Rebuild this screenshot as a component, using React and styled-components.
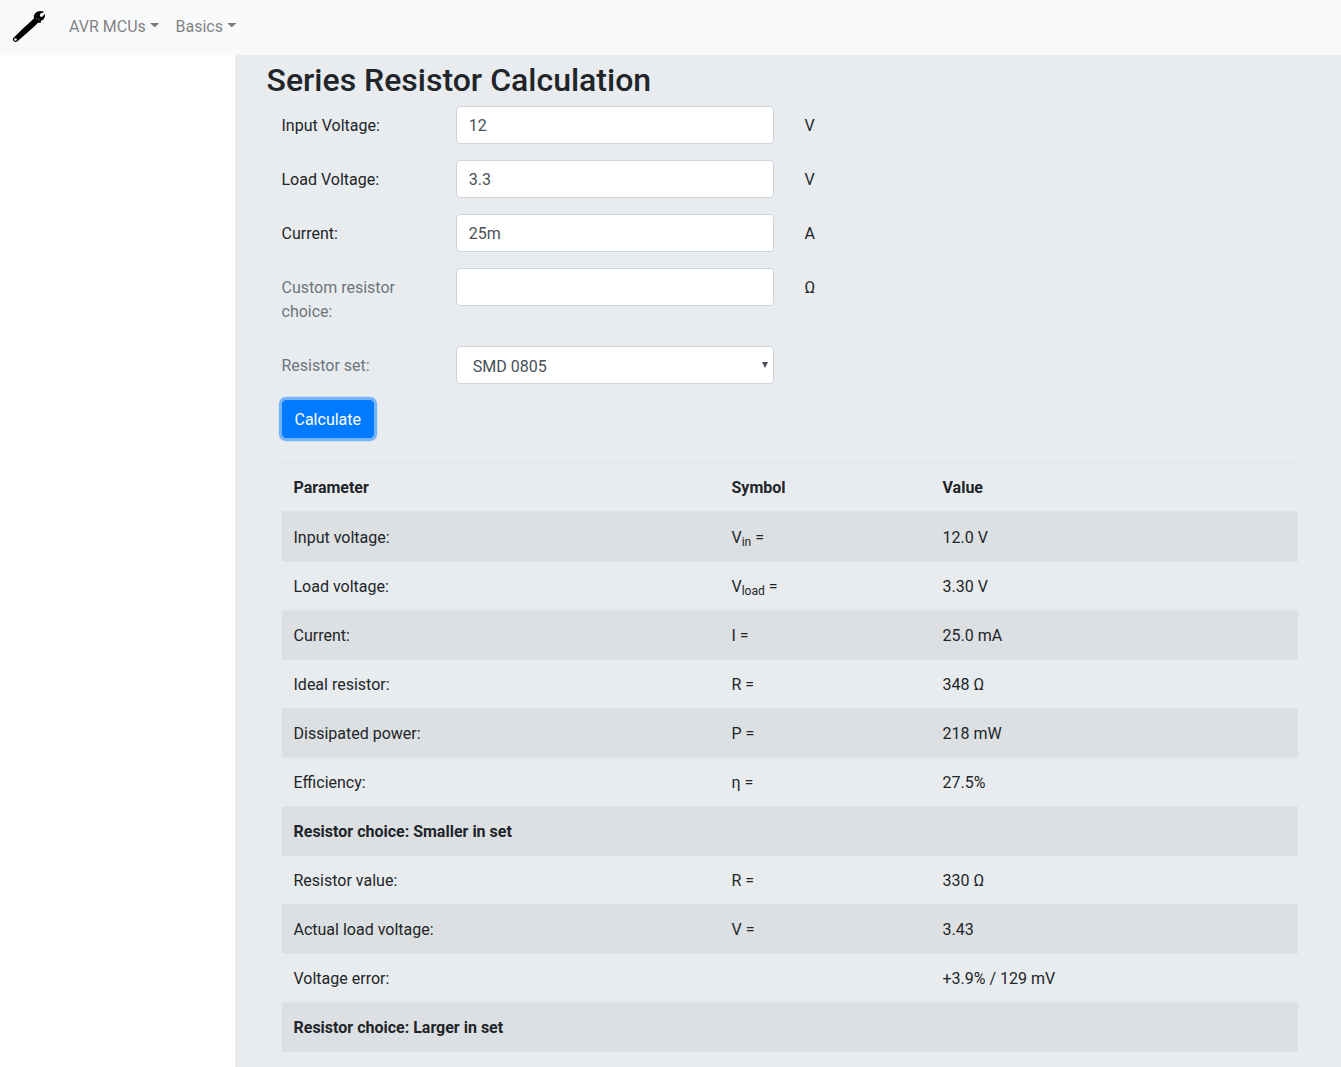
import React from "react";
import styled, { createGlobalStyle } from "styled-components";

const Global = createGlobalStyle`
  *, *::before, *::after { box-sizing: border-box; }
  html, body { height: 100%; margin: 0; overflow: hidden; }
  body {
    font-family: Roboto, "Liberation Sans", sans-serif;
    font-size: 16px;
    line-height: 1.5;
    color: #212529;
    background: #fff;
  }
`;

const Page = styled.div`
  display: flex;
  flex-direction: column;
  height: 100vh;
  overflow: hidden;
`;

const Navbar = styled.nav`
  display: flex;
  flex: none;
  align-items: center;
  height: 55px;
  padding: 0 12px 2px;
  background: #f8f9fa;
`;

const Brand = styled.a`
  display: flex;
  width: 36px;
  height: 34px;
  margin-right: 13px;
`;

const Menu = styled.div`
  display: flex;
`;

const MenuToggle = styled.a`
  padding: 8px;
  color: rgba(0, 0, 0, 0.5);
  white-space: nowrap;

  &::after {
    content: "";
    display: inline-block;
    width: 9.6px;
    height: 4.8px;
    margin-left: 0.255em;
    vertical-align: 0.255em;
    background: currentColor;
    clip-path: polygon(0 0, 100% 0, 50% 100%);
  }
`;

const Body = styled.div`
  display: flex;
  flex: 1;
  min-height: 0;
`;

const Sidebar = styled.aside`
  flex: none;
  width: 235px;
`;

const Main = styled.main`
  flex: 1;
  min-width: 0;
  overflow: hidden;
  padding: 6px 28.5px 0 31.5px;
  background: #e9ecef;
`;

const Title = styled.h2`
  margin: 0 0 7px;
  font-size: 32px;
  font-weight: 500;
  line-height: 1.2;
`;

const FormRow = styled.div`
  display: grid;
  grid-template-columns: 2fr 4fr 6fr;
  align-items: start;
  margin-right: 0.2px;
  margin-bottom: 16px;

  & > * {
    margin-left: 15px;
    margin-right: 15px;
  }
`;

const Label = styled.label`
  padding: 8px 0 6px;
  color: ${(p) => (p.$muted ? "#6c757d" : "inherit")};
`;

const Unit = styled.span`
  padding: 8px 0 6px;
`;

const Input = styled.input`
  min-width: 0;
  height: 38px;
  padding: 6px 12px;
  font: inherit;
  color: #495057;
  background: #fff;
  border: 1px solid #ced4da;
  border-radius: 4px;
`;

const SelectBox = styled.div`
  position: relative;
  height: 38px;
`;

const Select = styled.select`
  display: block;
  width: 100%;
  height: 38px;
  padding: 8px 16px 4px;
  appearance: none;
  font: inherit;
  color: #495057;
  background: #fff;
  border: 1px solid #ced4da;
  border-radius: 4px;
`;

const Arrow = styled.span`
  position: absolute;
  top: 16px;
  right: 6px;
  border-top: 6px solid #495057;
  border-left: 3px solid transparent;
  border-right: 3px solid transparent;
  pointer-events: none;
`;

const Button = styled.button`
  display: block;
  height: 38px;
  margin: 0 15px 24px;
  padding: 7px 12px 5px;
  font: inherit;
  color: #fff;
  background: #007bff;
  border: 1px solid #007bff;
  border-radius: 4px;
  outline: none;
  box-shadow: 0 0 0 3.2px rgba(0, 123, 255, 0.5);
`;

const Results = styled.div`
  padding: 0 15px;
`;

const Table = styled.table`
  width: 100%;
  table-layout: fixed;
  border-collapse: collapse;

  th, td {
    padding: 13px 12px 11px;
    text-align: left;
    vertical-align: top;
    border-top: 1px solid #dee2e6;
  }

  thead th {
    vertical-align: bottom;
    border-bottom: 2px solid #dee2e6;
  }

  tbody tr:nth-of-type(odd) {
    background: rgba(0, 0, 0, 0.05);
  }

  tbody tr:last-of-type th {
    padding-bottom: 12px;
  }

  sub {
    position: relative;
    bottom: -0.25em;
    font-size: 75%;
    line-height: 0;
    vertical-align: baseline;
  }
`;

const Column = styled.col`
  width: ${(p) => p.$width};
`;

const fields = [
  { label: "Input Voltage:", value: "12", unit: "V" },
  { label: "Load Voltage:", value: "3.3", unit: "V" },
  { label: "Current:", value: "25m", unit: "A" },
  { label: "Custom resistor choice:", value: "", unit: "Ω", muted: true },
];

const results = [
  { name: "Input voltage:", symbol: <>V<sub>in</sub> =</>, value: "12.0 V" },
  { name: "Load voltage:", symbol: <>V<sub>load</sub> =</>, value: "3.30 V" },
  { name: "Current:", symbol: "I =", value: "25.0 mA" },
  { name: "Ideal resistor:", symbol: "R =", value: "348 Ω" },
  { name: "Dissipated power:", symbol: "P =", value: "218 mW" },
  { name: "Efficiency:", symbol: "η =", value: "27.5%" },
  { heading: "Resistor choice: Smaller in set" },
  { name: "Resistor value:", symbol: "R =", value: "330 Ω" },
  { name: "Actual load voltage:", symbol: "V =", value: "3.43" },
  { name: "Voltage error:", symbol: "", value: "+3.9% / 129 mV" },
  { heading: "Resistor choice: Larger in set" },
];

function Wrench() {
  return (
    <svg width="36" height="34" viewBox="12 10 36 34" aria-hidden="true">
      <path
        d="M13.3 38 L23 28.6 L31.8 20.6 L34 18.2 L33.8 15.6 L35.4 13 Q37.4 11.2 40.4 11.1 L43.6 11.6 L43.6 12.6 Q41.2 12.8 40 14.3 L39.9 16.3 L41.4 17.1 Q43.4 16.6 44 14.6 L45 14.2 Q45.4 17.6 43.4 19.6 Q42.2 20.6 41 20.6 L41 22.6 L37.6 23.1 L35.4 25.4 L26.6 33.2 L17.8 41 Q15.4 42.8 13.5 41.1 Q12.2 39.7 13.3 38 Z"
        fill="#000"
      />
      <circle cx="15.5" cy="39.5" r="1.25" fill="#f8f9fa" />
      <path d="M36 17.4 L36.6 19.2 M37.8 17.8 L38.3 19.8 M39.4 18.8 L39.8 20.6" stroke="#888" strokeWidth="0.5" />
    </svg>
  );
}

export default function App() {
  return (
    <Page>
      <Global />
      <Navbar>
        <Brand><Wrench /></Brand>
        <Menu>
          <MenuToggle>AVR MCUs</MenuToggle>
          <MenuToggle>Basics</MenuToggle>
        </Menu>
      </Navbar>
      <Body>
        <Sidebar />
        <Main>
          <Title>Series Resistor Calculation</Title>
          {fields.map((f) => (
            <FormRow key={f.label}>
              <Label $muted={f.muted}>{f.label}</Label>
              <Input defaultValue={f.value} />
              <Unit>{f.unit}</Unit>
            </FormRow>
          ))}
          <FormRow>
            <Label $muted>Resistor set:</Label>
            <SelectBox>
              <Select defaultValue="SMD 0805">
                <option>SMD 0805</option>
              </Select>
              <Arrow />
            </SelectBox>
          </FormRow>
          <Button type="button">Calculate</Button>
          <Results>
            <Table>
              <colgroup>
                <Column $width="438px" />
                <Column $width="211px" />
                <Column />
              </colgroup>
              <thead>
                <tr><th>Parameter</th><th>Symbol</th><th>Value</th></tr>
              </thead>
              <tbody>
                {results.map((r) =>
                  r.heading ? (
                    <tr key={r.heading}><th colSpan={3}>{r.heading}</th></tr>
                  ) : (
                    <tr key={r.name}><td>{r.name}</td><td>{r.symbol}</td><td>{r.value}</td></tr>
                  )
                )}
              </tbody>
            </Table>
          </Results>
        </Main>
      </Body>
    </Page>
  );
}
